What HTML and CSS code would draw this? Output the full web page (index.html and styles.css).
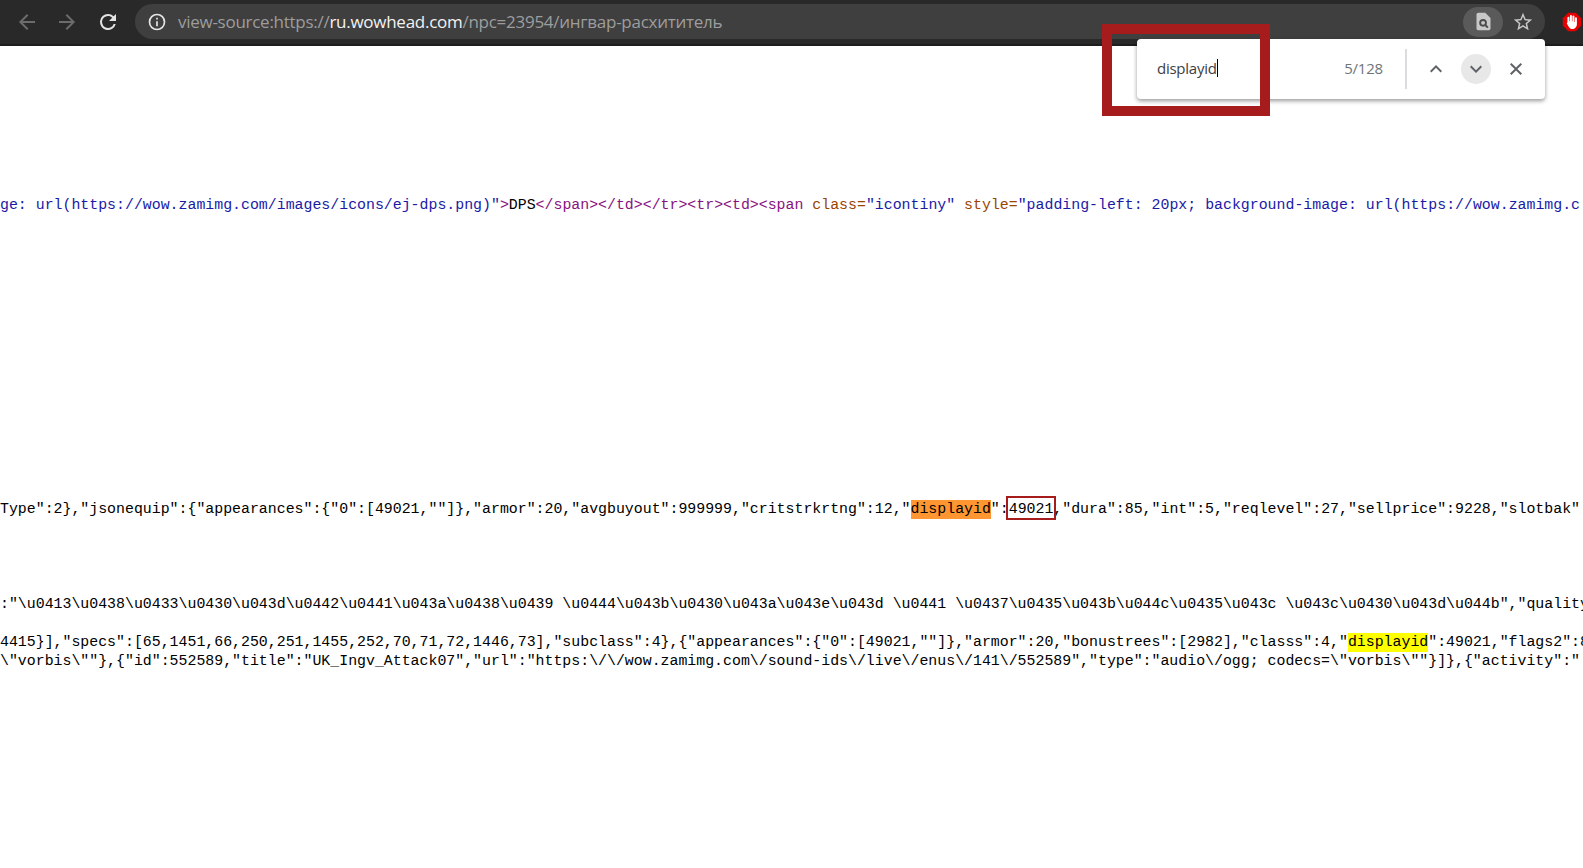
FILE: index.html
```html
<!DOCTYPE html>
<html lang="ru">
  <head>
    <meta charset="UTF-8" />
    <title>view-source:https://ru.wowhead.com/npc=23954/ингвар-расхититель</title>
    <link rel="stylesheet" href="styles.css">
  </head>
  <body>
    <div class="toolbar">
      <div class="nav">
        <svg class="nav-icon dim" viewBox="0 0 24 24"><path d="M20 11H7.800l5.600-5.600L12 4l-8 8 8 8 1.400-1.400L7.800 13H20z"/></svg>
        <svg class="nav-icon dim" viewBox="0 0 24 24"><path d="M12 4l-1.400 1.400 5.600 5.600H4v2h12.200l-5.600 5.600L12 20l8-8z"/></svg>
        <svg class="nav-icon reload" viewBox="0 0 24 24"><path d="M17.650 6.350A8 8 0 0 0 12 4a8 8 0 1 0 7.730 10h-2.080A6 6 0 1 1 12 6c1.660 0 3.140.690 4.220 1.780L13 11h7V4z"/></svg>
      </div>
      <div class="omnibox">
        <svg class="info-icon" viewBox="0 0 24 24"><path d="M11 7h2v2h-2zm0 4h2v6h-2zm1-9a10 10 0 1 0 0 20 10 10 0 0 0 0-20zm0 18a8 8 0 1 1 0-16 8 8 0 0 1 0 16z"/></svg>
        <div class="url">view-source:https://<span class="url-host">ru.wowhead.com</span>/npc=23954/ингвар-расхититель</div>
        <div class="find-pill">
          <svg class="find-icon" viewBox="0 0 24 24">
            <path class="doc" d="M6 2h8l6 6v12a2 2 0 0 1-2 2H6a2 2 0 0 1-2-2V4a2 2 0 0 1 2-2z"/>
            <circle class="lens" cx="11.500" cy="13.500" r="3.300"/>
            <path class="lens" d="M14 16l3 3"/>
          </svg>
        </div>
        <svg class="star-icon" viewBox="0 0 24 24"><path d="M22 9.240l-7.190-.620L12 2 9.190 8.630 2 9.240l5.460 4.730L5.820 21 12 17.270 18.180 21l-1.630-7.030L22 9.240zM12 15.400l-3.760 2.270 1-4.280-3.320-2.880 4.380-.380L12 6.100l1.710 4.040 4.380.380-3.320 2.880 1 4.280L12 15.400z"/></svg>
      </div>
      <svg class="adblock" viewBox="0 0 24 24">
        <path class="adblock-bg" d="M7.500 1h9L23 7.500v9L16.500 23h-9L1 16.500v-9z"/>
        <path class="adblock-hand" d="M6.500 12.500V7a1.200 1.200 0 0 1 2.400 0V11h.6V4.800a1.200 1.200 0 0 1 2.400 0V11h.6V5.500a1.200 1.200 0 0 1 2.400 0V12h.6V7.500a1.200 1.200 0 0 1 2.400 0v7c0 3.300-2.200 6-5.200 6-2.200 0-3.600-1.100-4.600-2.800l-2.200-3.700c-.5-1.100 1-2.100 1.600-1.500z"/>
      </svg>
    </div>

    <div class="source">
      <div class="line"><span class="attr-value">ge: url(https://wow.zamimg.com/images/icons/ej-dps.png)"</span><span class="tag">&gt;</span>DPS<span class="tag">&lt;/span&gt;&lt;/td&gt;&lt;/tr&gt;&lt;tr&gt;&lt;td&gt;&lt;span</span> <span class="attr-name">class=</span><span class="attr-value">"icontiny"</span> <span class="attr-name">style=</span><span class="attr-value">"padding-left: 20px; background-image: url(https://wow.zamimg.c</span></div>
      <div class="line gap-15">Type":2},"jsonequip":{"appearances":{"0":[49021,""]},"armor":20,"avgbuyout":999999,"critstrkrtng":12,"<span class="hit-current">displayid</span>":<span class="callout">49021</span>,"dura":85,"int":5,"reqlevel":27,"sellprice":9228,"slotbak"</div>
      <div class="line gap-4">:"\u0413\u0438\u0433\u0430\u043d\u0442\u0441\u043a\u0438\u0439 \u0444\u043b\u0430\u043a\u043e\u043d \u0441 \u0437\u0435\u043b\u044c\u0435\u043c \u043c\u0430\u043d\u044b","quality</div>
      <div class="line gap-1">4415}],"specs":[65,1451,66,250,251,1455,252,70,71,72,1446,73],"subclass":4},{"appearances":{"0":[49021,""]},"armor":20,"bonustrees":[2982],"classs":4,"<span class="hit">displayid</span>":49021,"flags2":8</div>
      <div class="line">\"vorbis\""},{"id":552589,"title":"UK_Ingv_Attack07","url":"https:\/\/wow.zamimg.com\/sound-ids\/live\/enus\/141\/552589","type":"audio\/ogg; codecs=\"vorbis\""}]},{"activity":":</div>
    </div>

    <div class="find-bar">
      <div class="find-input">displayid<span class="caret"></span></div>
      <div class="find-count">5/128</div>
      <div class="find-sep"></div>
      <div class="find-btn">
        <svg viewBox="0 0 24 24"><path d="M12 8l-6 6 1.400 1.400L12 10.800l4.600 4.600L18 14z"/></svg>
      </div>
      <div class="find-btn active">
        <svg viewBox="0 0 24 24"><path d="M16.600 8.600L12 13.200 7.400 8.600 6 10l6 6 6-6z"/></svg>
      </div>
      <div class="find-btn">
        <svg viewBox="0 0 24 24"><path d="M18 7.400L16.600 6 12 10.600 7.400 6 6 7.400 10.600 12 6 16.600 7.400 18 12 13.400 16.600 18 18 16.600 13.400 12z"/></svg>
      </div>
    </div>

    <div class="annotation"></div>
  </body>
</html>
```

FILE: styles.css
```css
* {
  margin: 0;
  padding: 0;
  box-sizing: border-box;
}
html,
body {
  height: 100%;
  overflow: hidden;
}
body {
  background: #fff;
  font-family: "Open Sans", "Noto Sans", sans-serif;
}

/* browser chrome */
.toolbar {
  height: 46px;
  background: #292929;
  border-bottom: 2px solid #1d1d1d;
  display: flex;
  align-items: flex-start;
  padding-top: 4px;
  overflow: hidden;
}
.nav {
  display: flex;
  align-items: center;
  gap: 16px;
  height: 35px;
  padding-left: 15px;
  width: 135px;
  flex-shrink: 0;
}
.nav-icon {
  width: 24px;
  height: 24px;
  fill: #e3e3e3;
  flex-shrink: 0;
}
.nav-icon.dim {
  fill: #6c6c6c;
}
.nav-icon.reload {
  margin-left: 1px;
}
.omnibox {
  flex: none;
  width: 1410px;
  height: 35px;
  background: #3f3f3f;
  border-radius: 18px;
  display: flex;
  align-items: center;
  padding-left: 12px;
}
.info-icon {
  width: 20px;
  height: 20px;
  fill: #e6e6e6;
  flex-shrink: 0;
}
.url {
  margin: -1px 0 0 11px;
  font-size: 17px;
  letter-spacing: -0.27px;
  color: #9d9d9d;
  white-space: nowrap;
  flex: 1;
}
.url-host {
  color: #f2f2f2;
}
.find-pill {
  width: 40px;
  height: 30px;
  background: #5a5a5a;
  border-radius: 15px;
  display: flex;
  align-items: center;
  justify-content: center;
}
.find-icon {
  width: 21px;
  height: 21px;
}
.doc {
  fill: #c8c8c8;
}
.lens {
  fill: none;
  stroke: #4c4c4c;
  stroke-width: 2.200;
}
.star-icon {
  width: 22px;
  height: 22px;
  fill: #c8c8c8;
  margin: 0 11px 0 9px;
}
.adblock {
  width: 20px;
  height: 20px;
  margin: 8px 0 0 17px;
  flex-shrink: 0;
}
.adblock-bg {
  fill: #e80000;
}
.adblock-hand {
  fill: #fff;
}

/* page source */
.source {
  padding-top: 150px;
  font-family: "Liberation Mono", monospace;
  font-size: 14.88px;
  line-height: 19px;
  color: #000;
}
.line {
  height: 19px;
  white-space: pre;
}
.gap-15 {
  margin-top: 285px;
}
.gap-4 {
  margin-top: 76px;
}
.gap-1 {
  margin-top: 19px;
}
.tag {
  color: #881280;
}
.attr-name {
  color: #994500;
}
.attr-value {
  color: #1a1aa6;
}
.hit,
.hit-current {
  display: inline-block;
  height: 19px;
}
.hit {
  background: #ffff00;
}
.hit-current {
  background: #ff9632;
}
.callout {
  padding-top: 2px;
  outline: 2px solid #a61c1c;
  outline-offset: 1px;
}

/* find in page */
.find-bar {
  position: absolute;
  left: 1137px;
  top: 39px;
  width: 408px;
  height: 60px;
  padding-right: 4px;
  background: #fff;
  border-radius: 4px;
  box-shadow: 0 2px 4px rgba(0, 0, 0, 0.4);
  display: flex;
  align-items: center;
}
.find-input {
  flex: 1;
  padding-left: 20px;
  margin-top: -3px;
  font-size: 15px;
  letter-spacing: -0.25px;
  color: #3c4043;
  display: flex;
  align-items: center;
}
.caret {
  width: 1px;
  height: 18px;
  background: #000;
}
.find-count {
  font-size: 15px;
  letter-spacing: -0.2px;
  margin-top: -3px;
  color: #70757a;
  margin-right: 22px;
}
.find-sep {
  width: 2px;
  height: 40px;
  background: #dadce0;
  margin-right: 14px;
}
.find-btn {
  width: 30px;
  height: 30px;
  border-radius: 50%;
  display: flex;
  align-items: center;
  justify-content: center;
  margin-right: 10px;
}
.find-btn.active {
  background: #e8e8e8;
}
.find-btn svg {
  width: 24px;
  height: 24px;
  fill: #5f6368;
}

/* red frame painted on top of the screenshot */
.annotation {
  position: absolute;
  left: 1102px;
  top: 24px;
  width: 168px;
  height: 92px;
  border: 10px solid #a61c1c;
}
```
